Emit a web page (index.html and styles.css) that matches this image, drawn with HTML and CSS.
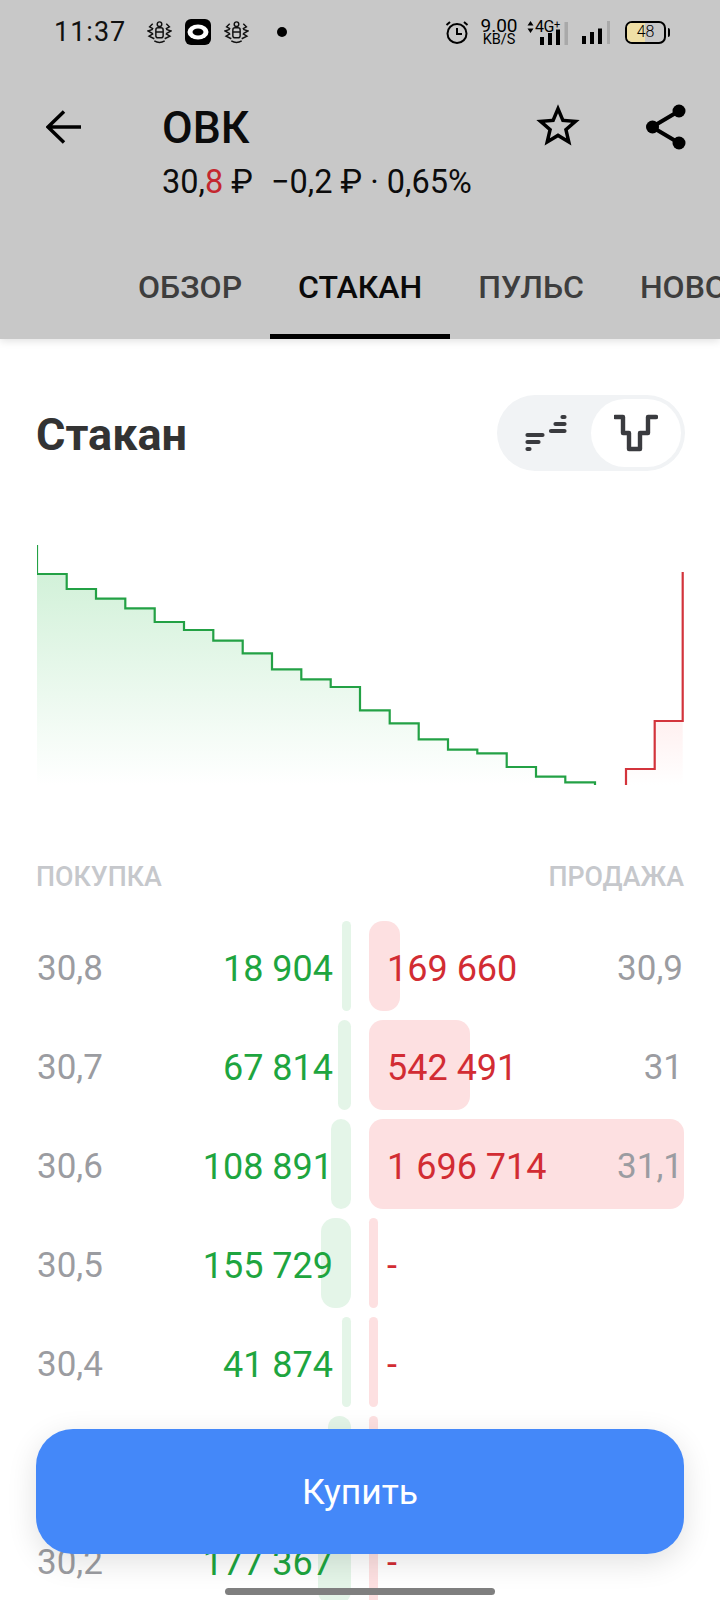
FILE: index.html
```html
<!DOCTYPE html>
<html lang="ru">
<head>
<meta charset="utf-8">
<title>ОВК — Стакан</title>
<link rel="stylesheet" href="styles.css">
</head>
<body>
<div class="screen">
  <header class="header">
    <div class="status">
      <span class="clock">11:37</span>
      <svg class="crest crest-a" viewBox="0 0 24 22"><g class="crest-lines"><rect x="8.500" y="6.500" width="7" height="9.500" rx="2"/><circle cx="12" cy="3" r="2.200"/><path d="M8.500 10.500h7M7 19q5 3 10 0M5.500 2.500 2.500 5.500 6 7.500M5.500 8 1 9.500 5.500 12M6 12 2 14.500 7 17M18.500 2.500l3 3L18 7.500M18.500 8l4.500 1.500-4.500 2.500M18 12l4 2.500L17 17"/></g></svg>
      <svg class="notif" viewBox="0 0 26 26"><rect width="26" height="26" rx="6" fill="#000"/><ellipse cx="13" cy="13" rx="10.500" ry="7.500" fill="#fff"/><ellipse cx="13" cy="13" rx="5.500" ry="3.500" fill="#000"/></svg>
      <svg class="crest crest-b" viewBox="0 0 24 22"><g class="crest-lines"><rect x="8.500" y="6.500" width="7" height="9.500" rx="2"/><circle cx="12" cy="3" r="2.200"/><path d="M8.500 10.500h7M7 19q5 3 10 0M5.500 2.500 2.500 5.500 6 7.500M5.500 8 1 9.500 5.500 12M6 12 2 14.500 7 17M18.500 2.500l3 3L18 7.500M18.500 8l4.500 1.500-4.500 2.500M18 12l4 2.500L17 17"/></g></svg>
      <span class="dot"></span>
      <svg class="alarm" viewBox="0 0 24 24"><circle cx="12" cy="13.500" r="9.500" fill="none" stroke="#000" stroke-width="2"/><path d="M12 8v6h5M1.500 5 5 2M22.500 5 19 2" fill="none" stroke="#000" stroke-width="2"/></svg>
      <span class="speed"><span class="speed-num">9.00</span><span class="speed-unit">KB/S</span></span>
      <span class="net">
        <svg class="arrows" viewBox="0 0 7 14"><path d="M0.500 5.500 3.500 1l3 4.500zM0.500 8.500h6L3.500 13z" fill="#000"/></svg>
        <span class="g4">4G<sup>+</sup></span>
        <svg class="bars bars-4g" viewBox="0 0 28 23"><path d="M0 15h4v8H0zM8 11h4v12H8zM16 7.500h4V23h-4z" fill="#000"/><path d="M24.500 0H28v23h-3.500z" fill="#a9a9a9"/></svg>
      </span>
      <svg class="bars bars-sim" viewBox="0 0 28 23"><path d="M0 15h4v8H0zM8 11h4v12H8zM16 7.500h4V23h-4z" fill="#000"/><path d="M25 0h3v23h-3z" fill="#a9a9a9"/></svg>
      <span class="battery"><span class="battery-fill"></span><span class="battery-num">48</span></span>
      <span class="battery-tip"></span>
    </div>
    <div class="topbar">
      <svg class="back" viewBox="0 0 35 34"><path d="M35 17H2M18 1.500 2 17l16 15.500" fill="none" stroke="#000" stroke-width="3.500"/></svg>
      <div class="title-block">
        <h1 class="title">ОВК</h1>
        <p class="quote">30,<span class="quote-red">8</span> ₽ <span class="quote-change">&nbsp;−0,2 ₽ · 0,65%</span></p>
      </div>
      <svg class="star" viewBox="0 0 24 24"><path d="M22 9.240l-7.190-.62L12 2 9.190 8.630 2 9.240l5.460 4.730L5.820 21 12 17.270 18.180 21l-1.630-7.030L22 9.240zM12 15.400l-3.760 2.270 1-4.280-3.320-2.880 4.380-.38L12 6.100l1.710 4.040 4.380.38-3.320 2.880 1 4.280L12 15.400z" fill="#000"/></svg>
      <svg class="share" viewBox="0 0 42 46"><path d="M33 7 6 23l27 16" fill="none" stroke="#000" stroke-width="4"/><circle cx="33" cy="7" r="6.500"/><circle cx="6.500" cy="23" r="6.500"/><circle cx="33" cy="39" r="6.500"/></svg>
    </div>
    <nav class="tabs">
      <span class="tab">ОБЗОР</span>
      <span class="tab tab-active">СТАКАН</span>
      <span class="tab">ПУЛЬС</span>
      <span class="tab">НОВОСТИ</span>
    </nav>
  </header>

  <main class="main">
    <div class="heading-row">
      <h2 class="heading">Стакан</h2>
      <div class="toggle">
        <span class="toggle-btn">
          <svg class="toggle-ic" viewBox="0 0 42 38"><path d="M2.500 21h15M2.500 28h11M2.500 35h2M37.500 3h2M30.500 10h9M26 17h13.500" fill="none" stroke="#3a3b3f" stroke-width="4.200" stroke-linecap="round"/></svg>
        </span>
        <span class="toggle-btn toggle-on">
          <svg class="toggle-ic toggle-ic-wide" viewBox="0 0 44 38"><path d="M1 3h8v16h6v16h11V19h8V3h8" fill="none" stroke="#3a3b3f" stroke-width="4.400" stroke-linecap="round" stroke-linejoin="round"/></svg>
        </span>
      </div>
    </div>

    <svg class="chart" viewBox="37 530 647 270">
      <defs>
        <linearGradient id="gf" x1="0" y1="0" x2="0" y2="1"><stop offset="0" stop-color="#d2f1d9"/><stop offset="1" stop-color="#ffffff"/></linearGradient>
        <linearGradient id="rf" x1="0" y1="0" x2="0" y2="1"><stop offset="0" stop-color="#fff0f0"/><stop offset="1" stop-color="#ffffff"/></linearGradient>
      </defs>
      <path d="M37 574H66.700V589H96V598.700H125.300V608.300H154.700V622H184V630H213.300V640.700H242.700V653.300H272V669.300H301.300V679.300H330.700V687H360V710.300H389.700V723.300H418.700V739.300H448V749.700H477.300V753.300H506.700V767H536V776.700H565.300V782.300H595V785H37Z" fill="url(#gf)"/>
      <path d="M626 769H654.700V721H682.700V785H626Z" fill="url(#rf)"/>
      <path d="M37 545V574H66.700V589H96V598.700H125.300V608.300H154.700V622H184V630H213.300V640.700H242.700V653.300H272V669.300H301.300V679.300H330.700V687H360V710.300H389.700V723.300H418.700V739.300H448V749.700H477.300V753.300H506.700V767H536V776.700H565.300V782.300H595V785" fill="none" stroke="#23a145" stroke-width="2.200"/>
      <path d="M626 785V769H654.700V721H682.700V572" fill="none" stroke="#d3343c" stroke-width="2.200"/>
    </svg>

    <div class="labels"><span>ПОКУПКА</span><span>ПРОДАЖА</span></div>

    <div class="book">
      <div class="row">
        <div class="bid"><span class="bar bar-bid" style="width:9px"></span><span class="price">30,8</span><span class="vol-bid">18 904</span></div>
        <div class="ask"><span class="bar bar-ask" style="width:31px"></span><span class="vol-ask">169 660</span><span class="price">30,9</span></div>
      </div>
      <div class="row">
        <div class="bid"><span class="bar bar-bid" style="width:13px"></span><span class="price">30,7</span><span class="vol-bid">67 814</span></div>
        <div class="ask"><span class="bar bar-ask" style="width:101px"></span><span class="vol-ask">542 491</span><span class="price">31</span></div>
      </div>
      <div class="row">
        <div class="bid"><span class="bar bar-bid" style="width:20px"></span><span class="price">30,6</span><span class="vol-bid">108 891</span></div>
        <div class="ask"><span class="bar bar-ask" style="width:315px"></span><span class="vol-ask">1 696 714</span><span class="price">31,1</span></div>
      </div>
      <div class="row">
        <div class="bid"><span class="bar bar-bid" style="width:30px"></span><span class="price">30,5</span><span class="vol-bid">155 729</span></div>
        <div class="ask"><span class="bar bar-ask" style="width:9px"></span><span class="vol-ask">-</span></div>
      </div>
      <div class="row">
        <div class="bid"><span class="bar bar-bid" style="width:9px"></span><span class="price">30,4</span><span class="vol-bid">41 874</span></div>
        <div class="ask"><span class="bar bar-ask" style="width:9px"></span><span class="vol-ask">-</span></div>
      </div>
      <div class="row">
        <div class="bid"><span class="bar bar-bid" style="width:23px"></span></div>
        <div class="ask"><span class="bar bar-ask" style="width:9px"></span></div>
      </div>
      <div class="row">
        <div class="bid"><span class="bar bar-bid" style="width:33px"></span><span class="price">30,2</span><span class="vol-bid">177 367</span></div>
        <div class="ask"><span class="bar bar-ask" style="width:9px"></span><span class="vol-ask">-</span></div>
      </div>
    </div>
  </main>

  <button class="buy">Купить</button>
  <span class="home"></span>
</div>
</body>
</html>
```
FILE: styles.css
```css
* { box-sizing: border-box; }
html, body { margin: 0; padding: 0; }
body { font-family: Roboto, "Noto Sans", sans-serif; background: #fff; color: #000; }
.screen { position: relative; width: 720px; height: 1600px; overflow: hidden; background: #fff; }

.header { position: relative; z-index: 1; height: 339px; background: #c8c8c8; box-shadow: 0 2px 8px rgba(0,0,0,.12); display: flex; flex-direction: column; }

.status { height: 64px; display: flex; align-items: center; padding-left: 54px; }
.clock { font-size: 27px; font-weight: 400; letter-spacing: 1px; width: 70px; color: #111; }
.crest { width: 25px; height: 23px; }
.crest-lines { fill: none; stroke: #111; stroke-width: 1.400; }
.crest-a { margin-left: 23px; }
.notif { width: 26px; height: 26px; margin-left: 13px; }
.crest-b { margin-left: 13px; }
.dot { width: 10px; height: 10px; border-radius: 50%; background: #000; margin-left: 28px; }
.alarm { width: 24px; height: 24px; margin-left: 158px; }
.speed { display: flex; flex-direction: column; align-items: center; margin-left: 11px; width: 38px; }
.speed-num { font-size: 19px; line-height: 15px; font-weight: 400; }
.speed-unit { font-size: 14.500px; line-height: 13px; font-weight: 400; }
.net { position: relative; display: flex; align-items: flex-start; width: 48px; height: 26px; margin-left: 9px; }
.arrows { width: 7px; height: 14px; margin-top: 1px; }
.g4 { font-size: 16px; line-height: 14px; font-weight: 400; margin-left: 1px; margin-top: 1px; letter-spacing: -.5px; }
.g4 sup { font-size: 11px; line-height: 0; vertical-align: 4px; }
.bars-4g { position: absolute; left: 13px; top: 3px; width: 28px; height: 23px; }
.bars-sim { width: 28px; height: 23px; margin-left: 7px; }
.battery { position: relative; width: 41px; height: 23px; margin-left: 15px; border: 2.500px solid #000; border-radius: 7px; overflow: hidden; display: flex; align-items: center; justify-content: center; }
.battery-fill { position: absolute; left: 0; top: 0; bottom: 0; width: 48%; background: #efdfa6; }
.battery-num { position: relative; font-size: 16px; line-height: 18px; font-weight: 300; }
.battery-tip { width: 2.500px; height: 9px; background: #000; margin-left: 1.500px; border-radius: 0 2px 2px 0; }

.topbar { height: 166px; display: flex; align-items: flex-start; position: relative; }
.back { width: 35px; height: 34px; margin: 46px 0 0 46px; }
.title-block { margin-left: 81px; width: 370px; }
.title { margin: 0; padding-top: 40px; font-size: 44.500px; line-height: 48px; font-weight: 500; color: #0c0c0c; }
.quote { margin: 11px 0 0; font-size: 32.500px; line-height: 38px; font-weight: 400; color: #0c0c0c; white-space: nowrap; }
.quote-red { color: #c4272f; }
.quote-change { margin-left: 2px; }
.star { width: 52px; height: 52px; margin-top: 36px; }
.share { width: 42px; height: 46px; margin: 40px 0 0 62px; }

.tabs { display: flex; flex: 1; padding-left: 110px; overflow: hidden; }
.tab { height: 109px; padding: 38px 28px 0; font-size: 32px; line-height: 38px; font-weight: 500; color: #3e3e3e; white-space: nowrap; border-bottom: 5px solid transparent; }
.tab-active { color: #0a0a0a; border-bottom-color: #000; }

.main { padding: 0 36px 0 37px; }
.heading-row { display: flex; align-items: center; justify-content: space-between; padding-top: 56px; }
.heading { margin: 0 0 0 -1px; padding-top: 4px; font-size: 45px; line-height: 72px; font-weight: 700; color: #333; }
.toggle { display: flex; width: 188px; height: 76px; padding: 4px; border-radius: 38px; background: #f1f3f5; margin-right: -1px; }
.toggle-btn { flex: 1; display: flex; align-items: center; justify-content: center; border-radius: 34px; }
.toggle-on { background: #fff; }
.toggle-ic { width: 42px; height: 38px; }
.toggle-ic-wide { width: 44px; }

.chart { display: block; width: 647px; height: 270px; margin-top: 59px; }

.labels { display: flex; justify-content: space-between; margin: 62px 0 0 -1px; font-size: 26.800px; line-height: 30px; font-weight: 500; color: #c6c8cc; }

.book { display: flex; flex-direction: column; gap: 9px; margin-top: 29px; }
.row { display: grid; grid-template-columns: 314px 315px; grid-template-rows: 90px; column-gap: 18px; height: 90px; font-size: 35px; line-height: 90px; }
.bid, .ask { position: relative; display: flex; justify-content: space-between; height: 90px; padding-top: 3px; }
.ask { padding-left: 18px; padding-right: 1px; }
.bid { padding-right: 18px; }
.bar { position: absolute; top: 0; bottom: 0; border-radius: 14px; }
.bar-bid { right: 0; background: #e4f5e8; }
.bar-ask { left: 0; background: #fde0e1; }
.price { position: relative; color: #9b9ca1; }
.vol-bid { position: relative; color: #1ea53f; font-size: 36px; }
.vol-ask { position: relative; color: #d22c33; font-size: 36px; }

.buy { position: absolute; z-index: 2; left: 36px; top: 1429px; width: 648px; height: 125px; padding-top: 2px; border: 0; border-radius: 37px; background: #4488f9; color: #fff; font: 400 35.500px Roboto, sans-serif; box-shadow: 0 8px 30px rgba(0,0,0,.12); }
.home { position: absolute; z-index: 3; left: 225px; top: 1588px; width: 270px; height: 7px; border-radius: 4px; background: #7f7f7f; }
```
